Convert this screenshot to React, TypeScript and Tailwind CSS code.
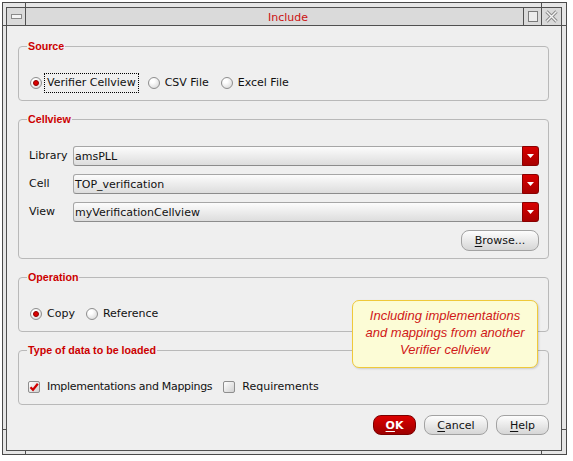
import React from "react";

function Radio({ checked = false }: { checked?: boolean }) {
  return (
    <span className="flex h-[12px] w-[12px] shrink-0 items-center justify-center rounded-full border border-[#8e8e8e] bg-[radial-gradient(circle_at_35%_30%,#ffffff_20%,#d2d2d2_100%)]">
      {checked && <span className="h-[6px] w-[6px] rounded-full border border-[#8a0000] bg-[#dd0000]" />}
    </span>
  );
}

function CheckBox({ checked = false }: { checked?: boolean }) {
  return (
    <span className="flex h-[12px] w-[12px] shrink-0 items-center justify-center rounded-[2px] border border-[#8e8e8e] bg-gradient-to-br from-[#ffffff] to-[#d0d0d0]">
      {checked && (
        <svg width="10" height="10" viewBox="0 0 10 10">
          <path d="M1.5 5.2 L4 7.8 L8.8 1.8" fill="none" stroke="#d00000" strokeWidth="2.2" />
        </svg>
      )}
    </span>
  );
}

function Option({
  kind,
  label,
  checked = false,
  focused = false,
  className = "",
}: {
  kind: "radio" | "check";
  label: string;
  checked?: boolean;
  focused?: boolean;
  className?: string;
}) {
  return (
    <span className="flex items-center">
      {kind === "radio" ? <Radio checked={checked} /> : <CheckBox checked={checked} />}
      <span
        className={
          "border border-dotted px-[2px] leading-[18px] " +
          (kind === "radio" ? "ml-[2px] " : "ml-[4px] ") +
          (focused ? "border-black " : "border-transparent ") +
          className
        }
      >
        {label}
      </span>
    </span>
  );
}

function Group({ title, children }: { title: string; children: React.ReactNode }) {
  return (
    <fieldset className="mt-[12px] rounded-[4px] border border-[#b9b9b9] pl-[10px] pr-[9px] pb-[7px]">
      <legend className="-ml-[2px] px-[1px] font-['Liberation_Sans',sans-serif] text-[10.7px] font-bold leading-[12px] text-[#cc0000]">
        {title}
      </legend>
      {children}
    </fieldset>
  );
}

function Combo({ value }: { value: string }) {
  return (
    <div className="flex h-[20px] items-stretch rounded-[3px] border border-[#a6a6a6] border-b-[#8c8c8c] bg-gradient-to-b from-[#fcfcfc] to-[#dddddd]">
      <span className="flex-1 pl-[1px] pt-px leading-[18px]">{value}</span>
      <span className="-my-px -mr-px flex w-[17px] items-start justify-center rounded-r-[3px] border border-[#8a0000] bg-gradient-to-b from-[#d80000] to-[#a80000] pt-[7px]">
        <svg width="7" height="4" viewBox="0 0 7 4">
          <path d="M0 0 H7 L3.5 4 Z" fill="#ffffff" />
        </svg>
      </span>
    </div>
  );
}

function PushButton({
  children,
  className = "",
  primary = false,
}: {
  children: React.ReactNode;
  className?: string;
  primary?: boolean;
}) {
  return (
    <button
      className={
        "flex items-center justify-center rounded-[8px] border leading-none " +
        (primary
          ? "border-[#7a0000] bg-gradient-to-b from-[#dc0000] to-[#9e0000] font-bold text-white "
          : "border-[#a2a2a2] bg-gradient-to-b from-[#fdfdfd] to-[#d6d6d6] text-[#111] ") +
        className
      }
    >
      {children}
    </button>
  );
}

export default function App() {
  return (
    <div className="relative h-[461px] w-[573px] overflow-hidden bg-white pl-[2px] pt-[2px] font-['DejaVu_Sans',sans-serif] text-[11px] text-[#111]">
      {/* window frame */}
      <div className="h-[453px] w-[565px] border border-[#4a4a4a] bg-[#e6e6e6] pb-[3px] pl-[3px] pr-[4px] pt-[4px]">
        <div className="flex h-full flex-col border border-[#505050]">
          {/* title bar */}
          <div className="flex h-[18px] border-b border-[#505050] bg-[#dadada]">
            <div className="flex w-[19px] items-center justify-center border-r border-[#505050]">
              <span className="h-[5px] w-[11px] border border-[#8a8a8a] bg-[#f4f4f4]" />
            </div>
            <div className="flex-1 pl-[27px] pt-px text-center leading-[17px] text-[#cc1111]">Include</div>
            <div className="flex w-[18px] items-center justify-center border-l border-[#505050]">
              <span className="h-[11px] w-[10px] border border-[#7a7a7a] bg-[#ececec]" />
            </div>
            <div className="flex w-[20px] items-center justify-center border-l border-[#505050]">
              <svg width="13" height="13" viewBox="0 0 13 13">
                <path d="M1.5 1.5 L11.5 11.5 M11.5 1.5 L1.5 11.5" stroke="#8a8a8a" strokeWidth="3.2" />
                <path d="M1.5 1.5 L11.5 11.5 M11.5 1.5 L1.5 11.5" stroke="#f4f4f4" strokeWidth="1.4" />
              </svg>
            </div>
          </div>

          {/* client area */}
          <div className="flex flex-1 flex-col bg-[#efefef] pl-[11px] pr-[12px] pt-[2px]">
            <Group title="Source">
              <div className="flex items-center gap-[9px] pl-[1px] pt-[21px]">
                <Option kind="radio" label="Verifier Cellview" checked focused />
                <Option kind="radio" label="CSV File" />
                <Option kind="radio" label="Excel File" />
              </div>
            </Group>

            <Group title="Cellview">
              <div className="grid grid-cols-[44px_1fr] items-center gap-y-[8px] pt-[21px]">
                <span>Library</span>
                <Combo value="amsPLL" />
                <span>Cell</span>
                <Combo value="TOP_verification" />
                <span>View</span>
                <Combo value="myVerificationCellview" />
              </div>
              <div className="mt-[8px] flex justify-end">
                <PushButton className="h-[21px] w-[78px]">
                  <span className="underline underline-offset-2">B</span>rowse...
                </PushButton>
              </div>
            </Group>

            <Group title="Operation">
              <div className="flex items-center gap-[8px] pl-[1px] pt-[21px]">
                <Option kind="radio" label="Copy" checked />
                <Option kind="radio" label="Reference" />
              </div>
            </Group>

            <Group title="Type of data to be loaded">
              <div className="-ml-[1px] flex items-center gap-[8px] pt-[21px]">
                <Option
                  kind="check"
                  label="Implementations and Mappings"
                  checked
                  className="tracking-[-0.3px]"
                />
                <Option kind="check" label="Requirements" />
              </div>
            </Group>

            <div className="mt-[10px] flex justify-end gap-[8px]">
              <PushButton primary className="h-[20px] w-[43px]">
                <span className="underline underline-offset-2">O</span>K
              </PushButton>
              <PushButton className="h-[20px] w-[64px]">
                <span className="underline underline-offset-2">C</span>ancel
              </PushButton>
              <PushButton className="h-[20px] w-[53px]">
                <span className="underline underline-offset-2">H</span>elp
              </PushButton>
            </div>
          </div>
        </div>
      </div>

      {/* frame resize ticks */}
      <span className="absolute left-[25px] top-[2px] h-[5px] w-px bg-[#505050]" />
      <span className="absolute left-[541px] top-[2px] h-[5px] w-px bg-[#505050]" />
      <span className="absolute left-[25px] top-[450px] h-[5px] w-px bg-[#505050]" />
      <span className="absolute left-[541px] top-[450px] h-[5px] w-px bg-[#505050]" />
      <span className="absolute left-[2px] top-[429px] h-px w-[5px] bg-[#505050]" />
      <span className="absolute left-[561px] top-[429px] h-px w-[6px] bg-[#505050]" />
      <span className="absolute left-[2px] top-[25px] h-px w-[5px] bg-[#505050]" />
      <span className="absolute left-[561px] top-[25px] h-px w-[6px] bg-[#505050]" />

      {/* tooltip */}
      <div className="absolute left-[352px] top-[300px] h-[68px] w-[186px] rounded-[7px] border border-[#efc93a] bg-[#fcfcd6] pt-[6px] text-center font-['Liberation_Sans',sans-serif] text-[13px] italic leading-[17px] text-[#d01818] shadow-[1px_1px_2px_rgba(0,0,0,0.15)]">
        Including implementations
        <br />
        and mappings from another
        <br />
        Verifier cellview
      </div>
    </div>
  );
}
